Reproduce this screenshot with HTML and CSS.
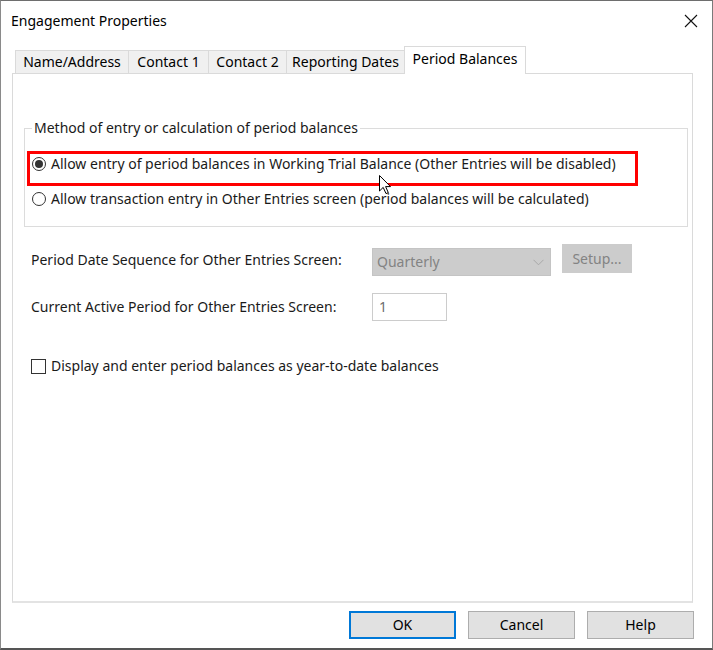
FILE: index.html
```html
<!DOCTYPE html>
<html>
<head>
<meta charset="utf-8">
<title>Engagement Properties</title>
<link rel="stylesheet" href="styles.css">
</head>
<body>
<div class="window">
  <div class="titlebar">
    <span class="title">Engagement Properties</span>
    <svg class="close" width="14" height="14" viewBox="0 0 14 14"><path d="M1 1 L13 13 M13 1 L1 13" stroke="#111" stroke-width="1.1" fill="none"/></svg>
  </div>
  <div class="tabs-area">
    <div class="tabstrip">
      <div class="tab tab-name">Name/Address</div>
      <div class="tab tab-c1">Contact 1</div>
      <div class="tab tab-c2">Contact 2</div>
      <div class="tab tab-rd">Reporting Dates</div>
      <div class="tab tab-pb active">Period Balances</div>
    </div>
    <div class="panel">
      <fieldset class="group">
        <legend class="legend">Method of entry or calculation of period balances</legend>
        <label class="radio-row">
          <span class="radio checked"><span class="dot"></span></span>
          <span>Allow entry of period balances in Working Trial Balance (Other Entries will be disabled)</span>
        </label>
        <label class="radio-row">
          <span class="radio"></span>
          <span>Allow transaction entry in Other Entries screen (period balances will be calculated)</span>
        </label>
        <div class="highlight"></div>
        <svg class="cursor" width="13" height="20" viewBox="0 0 13 20"><path d="M0.5 0.5 L0.5 16 L4.2 12.4 L7 18.6 L9.3 17.6 L6.6 11.6 L11.5 11.6 Z" fill="#fff" stroke="#000" stroke-width="1"/></svg>
      </fieldset>
      <div class="form-row first">
        <span class="label">Period Date Sequence for Other Entries Screen:</span>
        <div class="select">
          <span>Quarterly</span>
          <svg width="11" height="7" viewBox="0 0 11 7"><path d="M0.5 0.8 L5.5 5.8 L10.5 0.8" stroke="#a8a8a8" stroke-width="1" fill="none"/></svg>
        </div>
        <div class="setup">Setup...</div>
      </div>
      <div class="form-row second">
        <span class="label">Current Active Period for Other Entries Screen:</span>
        <div class="textbox">1</div>
      </div>
      <label class="check-row">
        <span class="checkbox"></span>
        <span>Display and enter period balances as year-to-date balances</span>
      </label>
    </div>
  </div>
  <div class="buttons">
    <div class="btn default">OK</div>
    <div class="btn">Cancel</div>
    <div class="btn">Help</div>
  </div>
</div>
</body>
</html>
```
FILE: styles.css
```css
* { box-sizing: border-box; }
html, body { margin: 0; padding: 0; background: #fff; }
body {
  font-family: "Noto Sans", "Open Sans", sans-serif;
  font-size: 14px;
  line-height: 20px;
  color: #1a1a1a;
}
.window {
  width: 713px;
  height: 650px;
  border-top: 1px solid #6e6e6e;
  border-left: 1px solid #8a8a8a;
  border-right: 1px solid #7a7a7a;
  border-bottom: 2px solid #555;
  display: flex;
  flex-direction: column;
  background: #fff;
}
.titlebar {
  height: 39px;
  flex: none;
  display: flex;
  align-items: center;
  justify-content: space-between;
  padding: 0 14px 0 10px;
}
.title { font-size: 14px; color: #000; }
.tabs-area {
  margin-left: 11px;
  width: 681px;
  display: flex;
  flex-direction: column;
  flex: none;
}
.tabstrip {
  display: flex;
  align-items: flex-end;
  padding-left: 3px;
  height: 27px;
  margin-top: 6px;
}
.tab {
  height: 23px;
  line-height: 22px;
  text-align: center;
  background: #f0f0f0;
  border: 1px solid #dadada;
  border-bottom: none;
  border-right: none;
  color: #000;
  white-space: nowrap;
}
.tab-name { width: 113px; }
.tab-c1 { width: 80px; }
.tab-c2 { width: 78px; }
.tab-rd { width: 118px; }
.tab-pb { width: 122px; }
.tab.active {
  height: 28px;
  background: #fff;
  border: 1px solid #dadada;
  border-bottom: none;
  line-height: 24px;
  margin-bottom: -1px;
  position: relative;
  z-index: 1;
}
.panel {
  height: 530px;
  flex: none;
  border: 1px solid #dadada;
  border-bottom: 2px solid #e3e3e3;
  padding: 44px 4px 0 11px;
  display: flex;
  flex-direction: column;
}
.group {
  position: relative;
  margin: 0;
  border: 1px solid #dcdcdc;
  padding: 8px 0 18px 7px;
  height: 109px;
  flex: none;
}
.legend {
  padding: 0 2px;
  margin-left: 0;
  color: #1a1a1a;
}
.radio-row {
  display: flex;
  align-items: center;
  gap: 5px;
  height: 35px;
}
.radio {
  width: 14px;
  height: 14px;
  border: 1px solid #333;
  border-radius: 50%;
  display: flex;
  align-items: center;
  justify-content: center;
  flex: none;
}
.dot {
  width: 8px;
  height: 8px;
  background: #333;
  border-radius: 50%;
}
.highlight {
  position: absolute;
  left: 2px;
  top: 13px;
  width: 611px;
  height: 35px;
  border: 3px solid #f00;
}
.cursor {
  position: absolute;
  left: 354px;
  top: 37px;
}
.form-row {
  display: flex;
  align-items: center;
  padding-left: 7px;
  flex: none;
}
.form-row.first { margin-top: 17px; height: 32px; }
.form-row.second { margin-top: 16px; height: 30px; }
.label { width: 341px; }
.select {
  width: 179px;
  height: 28px;
  background: #cccccc;
  border: 1px solid #c4c4c4;
  color: #838383;
  display: flex;
  align-items: center;
  justify-content: space-between;
  padding: 0 6px 0 4px;
  margin-top: 4px;
}
.setup {
  width: 70px;
  height: 29px;
  margin-left: 11px;
  margin-top: -3px;
  background: #cccccc;
  color: #838383;
  display: flex;
  align-items: center;
  justify-content: center;
}
.textbox {
  width: 75px;
  height: 28px;
  border: 1px solid #cccccc;
  color: #6d6d6d;
  padding-left: 6px;
  line-height: 26px;
}
.check-row {
  display: flex;
  align-items: center;
  gap: 5px;
  margin-top: 34px;
  padding-left: 7px;
}
.checkbox {
  width: 15px;
  height: 15px;
  border: 1px solid #333;
  flex: none;
}
.buttons {
  display: flex;
  justify-content: flex-end;
  gap: 12px;
  padding: 8px 18px 0 0;
}
.btn {
  width: 107px;
  height: 28px;
  background: #e1e1e1;
  border: 1px solid #adadad;
  color: #000;
  display: flex;
  align-items: center;
  justify-content: center;
}
.btn.default {
  border: 2px solid #0078d7;
}
```
